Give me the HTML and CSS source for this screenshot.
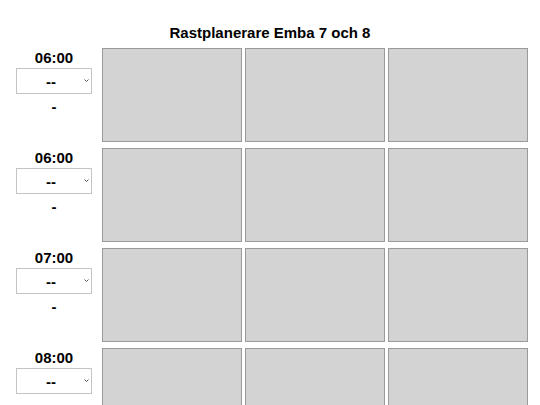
FILE: index.html
```html
<!DOCTYPE html>
<html lang="sv">
<head>
<meta charset="utf-8">
<title>Rastplanerare Emba 7 och 8</title>
<link rel="stylesheet" href="styles.css">
</head>
<body>
<h1 class="title">Rastplanerare Emba 7 och 8</h1>
<div class="schedule">
  <div class="row">
    <div class="slot">
      <div class="time">06:00</div>
      <div class="picker"><select class="select"><option>--</option></select><svg class="chev" width="5" height="3" viewBox="0 0 5 3"><path d="M0.5 0.5 L2.5 2.5 L4.5 0.5" fill="none" stroke="#555" stroke-width="1"/></svg></div>
      <div class="dash">-</div>
    </div>
    <div class="cards"><div class="card"></div><div class="card"></div><div class="card"></div></div>
  </div>
  <div class="row">
    <div class="slot">
      <div class="time">06:00</div>
      <div class="picker"><select class="select"><option>--</option></select><svg class="chev" width="5" height="3" viewBox="0 0 5 3"><path d="M0.5 0.5 L2.5 2.5 L4.5 0.5" fill="none" stroke="#555" stroke-width="1"/></svg></div>
      <div class="dash">-</div>
    </div>
    <div class="cards"><div class="card"></div><div class="card"></div><div class="card"></div></div>
  </div>
  <div class="row">
    <div class="slot">
      <div class="time">07:00</div>
      <div class="picker"><select class="select"><option>--</option></select><svg class="chev" width="5" height="3" viewBox="0 0 5 3"><path d="M0.5 0.5 L2.5 2.5 L4.5 0.5" fill="none" stroke="#555" stroke-width="1"/></svg></div>
      <div class="dash">-</div>
    </div>
    <div class="cards"><div class="card"></div><div class="card"></div><div class="card"></div></div>
  </div>
  <div class="row">
    <div class="slot">
      <div class="time">08:00</div>
      <div class="picker"><select class="select"><option>--</option></select><svg class="chev" width="5" height="3" viewBox="0 0 5 3"><path d="M0.5 0.5 L2.5 2.5 L4.5 0.5" fill="none" stroke="#555" stroke-width="1"/></svg></div>
      <div class="dash">-</div>
    </div>
    <div class="cards"><div class="card"></div><div class="card"></div><div class="card"></div></div>
  </div>
</div>
</body>
</html>
```

FILE: styles.css
```css
html, body {
  margin: 0;
  padding: 0;
  background: #ffffff;
}
body {
  font-family: "Liberation Sans", Arial, sans-serif;
  color: #000;
  overflow: hidden;
}
.title {
  margin: 0;
  padding-top: 24px;
  font-size: 15px;
  line-height: 17px;
  font-weight: bold;
  text-align: center;
}
.schedule {
  padding: 7px 0 0 8px;
  display: flex;
  flex-direction: column;
  gap: 6px;
}
.row {
  display: flex;
  gap: 2px;
}
.slot {
  width: 92px;
  display: flex;
  flex-direction: column;
  align-items: center;
  padding-top: 1px;
}
.time {
  font-size: 15px;
  line-height: 17px;
  font-weight: bold;
}
.picker {
  position: relative;
  margin-top: 2px;
}
.select {
  display: block;
  appearance: none;
  -webkit-appearance: none;
  width: 76px;
  height: 26px;
  margin: 0;
  padding: 1px 6px 0 0;
  border: 1px solid #c4c4c4;
  border-radius: 0;
  background: #ffffff;
  font-family: "Liberation Sans", Arial, sans-serif;
  font-size: 15px;
  font-weight: bold;
  color: #000;
  text-align: center;
  text-align-last: center;
}
.chev {
  position: absolute;
  right: 3px;
  top: 11px;
}
.dash {
  margin-top: 4px;
  font-size: 15px;
  line-height: 17px;
  font-weight: bold;
}
.cards {
  display: grid;
  grid-template-columns: repeat(3, 140px);
  gap: 3px;
}
.card {
  height: 94px;
  box-sizing: border-box;
  background: #d3d3d3;
  border: 1px solid #9a9a9a;
}
```
